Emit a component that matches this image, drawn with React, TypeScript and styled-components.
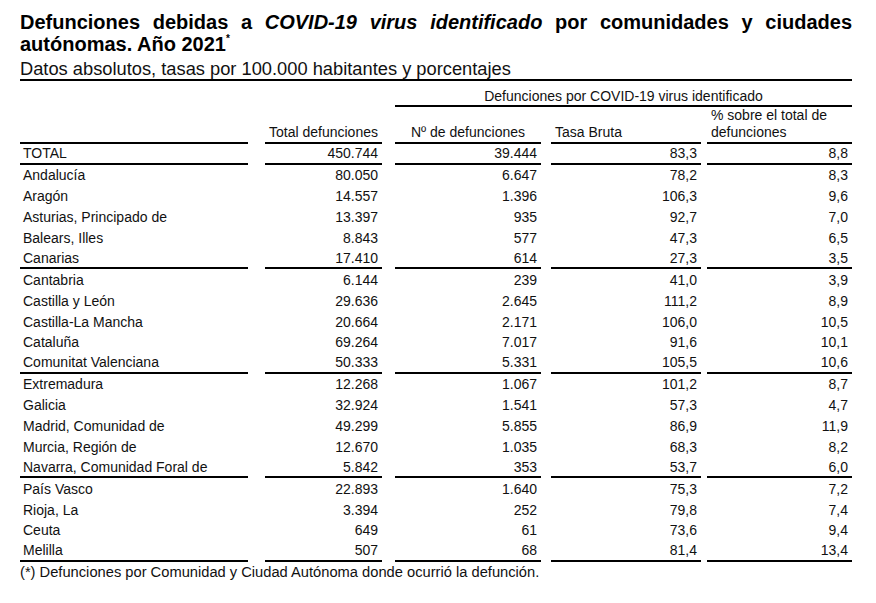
import React from "react";
import styled, { createGlobalStyle } from "styled-components";

const Global = createGlobalStyle`
  html, body { margin: 0; padding: 0; background: #ffffff; }
  body { font-family: "Liberation Sans", Arial, sans-serif; color: #111; }
`;

const Page = styled.div`
  width: 832px;
  padding: 11px 0 0 20px;
`;

const Title = styled.h1`
  margin: 0;
  font-size: 20px;
  line-height: 22px;
  font-weight: bold;
  text-align: justify;
  color: #000;
  em { font-style: italic; }
  sup { font-size: 10px; line-height: 0; vertical-align: 9px; font-weight: bold; }
`;

const Subtitle = styled.div`
  margin: 0;
  padding-top: 3px;
  font-size: 18.3px;
  line-height: 21px;
  border-bottom: 2px solid #000;
  color: #111;
`;

const COLS = "228px 17px 117px 13px 146px 10px 150px 6px 145px";

const Row = styled.div<{ $h: number }>`
  display: grid;
  grid-template-columns: ${COLS};
  height: ${(p) => p.$h}px;
  font-size: 14px;
`;

const Cell = styled.div<{
  $col: number;
  $span?: number;
  $align?: "left" | "right" | "center";
  $rule?: boolean;
  $valign?: "center" | "end";
}>`
  grid-column: ${(p) => p.$col * 2 - 1} / span ${(p) => (p.$span ? p.$span * 2 - 1 : 1)};
  box-sizing: border-box;
  display: flex;
  flex-direction: column;
  justify-content: ${(p) => (p.$valign === "end" ? "flex-end" : "center")};
  text-align: ${(p) => p.$align || "left"};
  padding: 0 4px 0 3px;
  border-bottom: ${(p) => (p.$rule ? "2px solid #000" : "0")};
  white-space: nowrap;
`;

const HeadText = styled.div<{ $lh?: number }>`
  line-height: ${(p) => p.$lh || 17}px;
  white-space: normal;
`;

const HeadCell = styled(Cell)`
  padding: 0 4px 1px 4px;
`;

const Footnote = styled.div`
  font-size: 14.7px;
  line-height: 16px;
  padding-top: 2px;
  color: #111;
`;

type R = [string, string, string, string, string, boolean?];

const data: R[] = [
  ["Andalucía", "80.050", "6.647", "78,2", "8,3"],
  ["Aragón", "14.557", "1.396", "106,3", "9,6"],
  ["Asturias, Principado de", "13.397", "935", "92,7", "7,0"],
  ["Balears, Illes", "8.843", "577", "47,3", "6,5"],
  ["Canarias", "17.410", "614", "27,3", "3,5", true],
  ["Cantabria", "6.144", "239", "41,0", "3,9"],
  ["Castilla y León", "29.636", "2.645", "111,2", "8,9"],
  ["Castilla-La Mancha", "20.664", "2.171", "106,0", "10,5"],
  ["Cataluña", "69.264", "7.017", "91,6", "10,1"],
  ["Comunitat Valenciana", "50.333", "5.331", "105,5", "10,6", true],
  ["Extremadura", "12.268", "1.067", "101,2", "8,7"],
  ["Galicia", "32.924", "1.541", "57,3", "4,7"],
  ["Madrid, Comunidad de", "49.299", "5.855", "86,9", "11,9"],
  ["Murcia, Región de", "12.670", "1.035", "68,3", "8,2"],
  ["Navarra, Comunidad Foral de", "5.842", "353", "53,7", "6,0", true],
  ["País Vasco", "22.893", "1.640", "75,3", "7,2"],
  ["Rioja, La", "3.394", "252", "79,8", "7,4"],
  ["Ceuta", "649", "61", "73,6", "9,4"],
  ["Melilla", "507", "68", "81,4", "13,4", true],
];

const DataRow: React.FC<{ r: R }> = ({ r }) => (
  <Row $h={20.9}>
    <Cell $col={1} $rule={r[5]}>{r[0]}</Cell>
    <Cell $col={2} $align="right" $rule={r[5]}>{r[1]}</Cell>
    <Cell $col={3} $align="right" $rule={r[5]}>{r[2]}</Cell>
    <Cell $col={4} $align="right" $rule={r[5]}>{r[3]}</Cell>
    <Cell $col={5} $align="right" $rule={r[5]}>{r[4]}</Cell>
  </Row>
);

export default function App() {
  return (
    <>
      <Global />
      <Page>
        <Title>
          Defunciones debidas a <em>COVID-19 virus identificado</em> por comunidades y ciudades
          autónomas. Año 2021<sup>*</sup>
        </Title>
        <Subtitle>Datos absolutos, tasas por 100.000 habitantes y porcentajes</Subtitle>
        <Row $h={26}>
          <HeadCell $col={3} $span={3} $align="center" $valign="end" $rule>
            <HeadText $lh={16}>Defunciones por COVID-19 virus identificado</HeadText>
          </HeadCell>
        </Row>
        <Row $h={37}>
          <HeadCell $col={1} $valign="end" $rule />
          <HeadCell $col={2} $align="center" $valign="end" $rule>
            <HeadText>Total defunciones</HeadText>
          </HeadCell>
          <HeadCell $col={3} $align="center" $valign="end" $rule>
            <HeadText>Nº de defunciones</HeadText>
          </HeadCell>
          <HeadCell $col={4} $valign="end" $rule>
            <HeadText>Tasa Bruta</HeadText>
          </HeadCell>
          <HeadCell $col={5} $valign="end" $rule>
            <HeadText>% sobre el total de defunciones</HeadText>
          </HeadCell>
        </Row>
        <DataRow r={["TOTAL", "450.744", "39.444", "83,3", "8,8", true]} />
        {data.map((r) => (
          <DataRow key={r[0]} r={r} />
        ))}
        <Footnote>(*) Defunciones por Comunidad y Ciudad Autónoma donde ocurrió la defunción.</Footnote>
      </Page>
    </>
  );
}
